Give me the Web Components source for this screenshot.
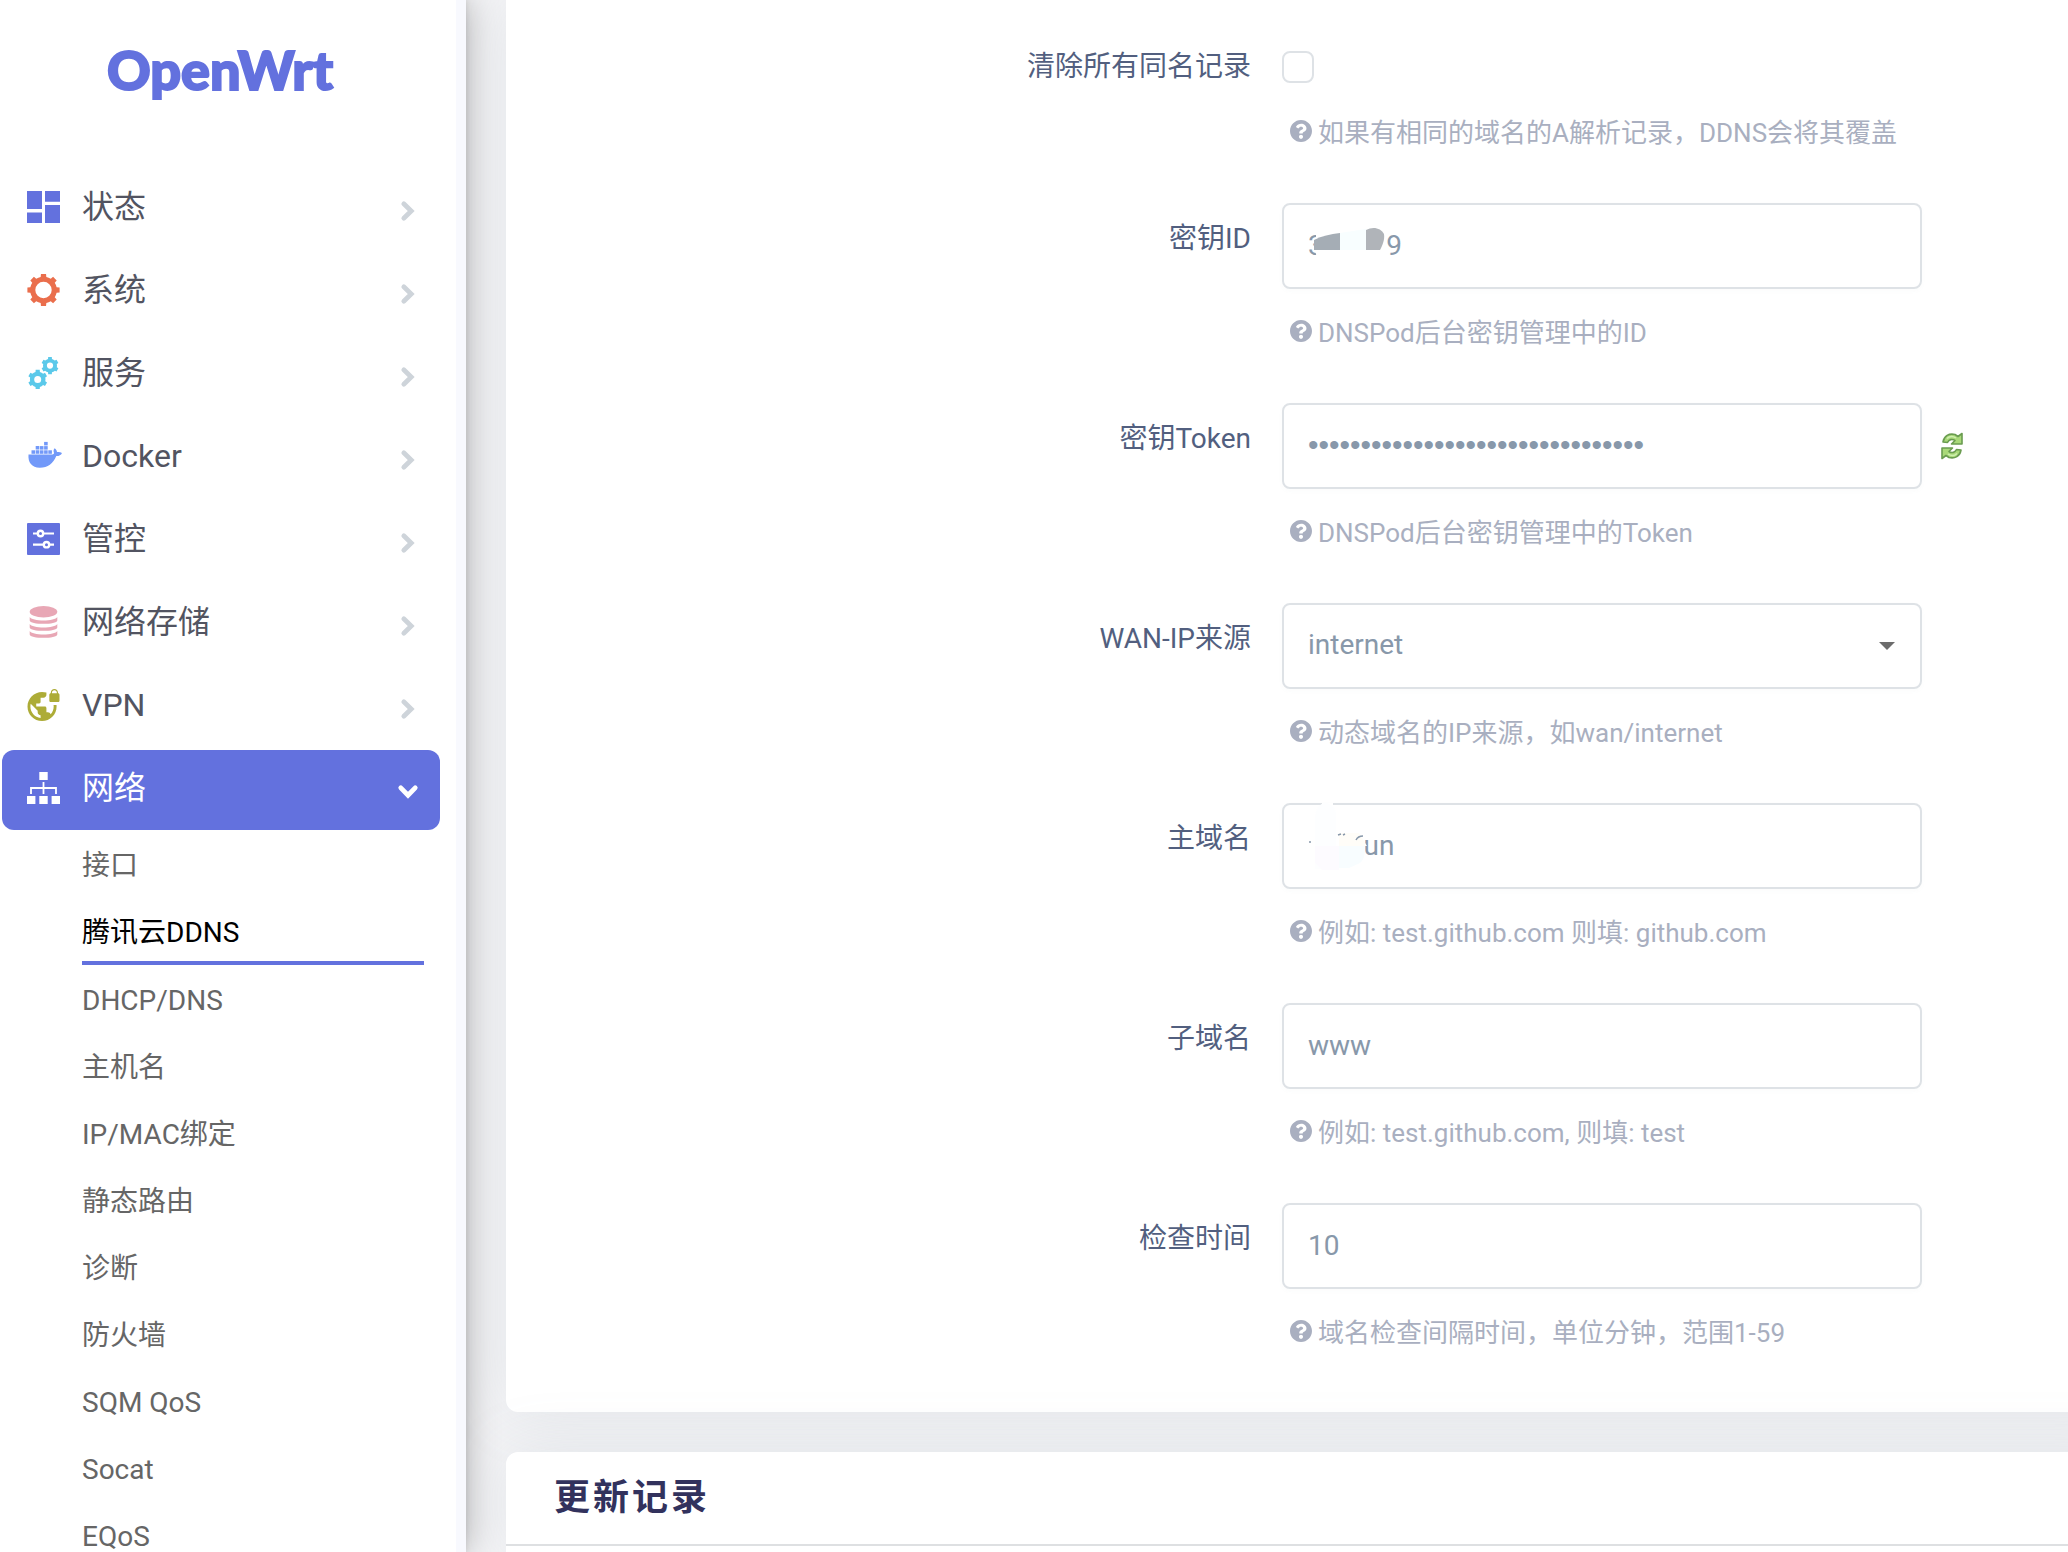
<!DOCTYPE html>
<html lang="zh-CN">
<head>
<meta charset="utf-8">
<title>腾讯云DDNS - OpenWrt</title>
<style>
html, body { margin: 0; height: 100%; }
body {
  background: #f4f4f6;
  overflow: hidden;
  font-family: Roboto, "Noto Sans CJK SC", sans-serif;
  --primary: #6371de;
}
</style>
</head>
<body>
<ow-shell>
  <ow-sidebar slot="side">
    <ow-menu-item icon="dashboard" label="状态" color="#6371de"></ow-menu-item>
    <ow-menu-item icon="gear" label="系统" color="#ea6e4c"></ow-menu-item>
    <ow-menu-item icon="gears" label="服务" color="#5bc9ea"></ow-menu-item>
    <ow-menu-item icon="docker" label="Docker" color="#7299f9"></ow-menu-item>
    <ow-menu-item icon="sliders" label="管控" color="#6371de"></ow-menu-item>
    <ow-menu-item icon="database" label="网络存储" color="#e8a7b5"></ow-menu-item>
    <ow-menu-item icon="vpn" label="VPN" color="#adac37"></ow-menu-item>
    <ow-menu-item icon="sitemap" label="网络" color="#ffffff" open>
      <ow-sub-item label="接口"></ow-sub-item>
      <ow-sub-item label="腾讯云DDNS" active></ow-sub-item>
      <ow-sub-item label="DHCP/DNS"></ow-sub-item>
      <ow-sub-item label="主机名"></ow-sub-item>
      <ow-sub-item label="IP/MAC绑定"></ow-sub-item>
      <ow-sub-item label="静态路由"></ow-sub-item>
      <ow-sub-item label="诊断"></ow-sub-item>
      <ow-sub-item label="防火墙"></ow-sub-item>
      <ow-sub-item label="SQM QoS"></ow-sub-item>
      <ow-sub-item label="Socat"></ow-sub-item>
      <ow-sub-item label="EQoS"></ow-sub-item>
    </ow-menu-item>
  </ow-sidebar>
  <ow-form-card>
    <ow-field type="checkbox" label="清除所有同名记录" hint="如果有相同的域名的A解析记录，DDNS会将其覆盖"></ow-field>
    <ow-field type="text" label="密钥ID" value="3         9" mask="id" hint="DNSPod后台密钥管理中的ID"></ow-field>
    <ow-field type="password" label="密钥Token" value="00000000000000000000000000000000" hint="DNSPod后台密钥管理中的Token"></ow-field>
    <ow-field type="select" label="WAN-IP来源" value="internet" hint="动态域名的IP来源，如wan/internet"></ow-field>
    <ow-field type="text" label="主域名" value="        un" mask="domain" hint="例如: test.github.com 则填: github.com"></ow-field>
    <ow-field type="text" label="子域名" value="www" hint="例如: test.github.com, 则填: test"></ow-field>
    <ow-field type="text" label="检查时间" value="10" hint="域名检查间隔时间，单位分钟，范围1-59"></ow-field>
  </ow-form-card>
  <ow-log-card>更新记录</ow-log-card>
</ow-shell>

<script>
/* Builds a cog outline with n flat teeth and a round hole. */
function cog(cx, cy, outer, root, hole, n) {
  const step = Math.PI * 2 / n;
  const pt = (r, a) => (cx + r * Math.sin(a)).toFixed(2) + ' ' + (cy - r * Math.cos(a)).toFixed(2);
  let d = '';
  for (let i = 0; i < n; i++) {
    const a = i * step;
    d += (i ? 'L' : 'M') + pt(root, a - step * .27) + 'L' + pt(outer, a - step * .2) +
         'L' + pt(outer, a + step * .2) + 'L' + pt(root, a + step * .27) +
         'A' + root + ' ' + root + ' 0 0 1 ' + pt(root, a + step * .73);
  }
  return d + 'Z M' + (cx - hole) + ' ' + cy +
    'a' + hole + ' ' + hole + ' 0 1 0 ' + hole * 2 + ' 0a' + hole + ' ' + hole + ' 0 1 0 ' + -hole * 2 + ' 0Z';
}
const band = y => `<path d="M2.7 ${y}c2 4.6 25.6 4.6 27.6 0v3.4c0 4.600-27.600 4.600-27.600 0z"/>`;
const box = (x, y) => `<path d="M${x} ${y}h3.600v3.500h-3.600z"/>`;
const ICONS = {
  dashboard: ['0 0 33 32', '<path d="M0 0h15v18H0zM0 21.500h15V32H0zM18 0h15v10.700H18zM18 14h15v18H18z"/>'],
  gear: ['0 0 33 32', `<path fill-rule="evenodd" d="${cog(16.5, 16, 16.3, 13.4, 8.2, 8)}"/>`],
  gears: ['0 0 33 32', `<path fill-rule="evenodd" d="${cog(10.7, 22.4, 9.8, 7.8, 3.5, 6)}"/><path fill-rule="evenodd" d="${cog(23, 8.6, 8.8, 7, 3.1, 6)}"/>`],
  docker: ['0 0 33 32', [[17.1, 1.9], [8.7, 6.1], [12.9, 6.1], [17.1, 6.1], [4.5, 10.3], [8.7, 10.3], [12.9, 10.3], [17.1, 10.3], [21.3, 10.3]].map(b => box(...b)).join('') +
    '<path d="M1.500 14.600H24.500c1.300-.2 2.200-.7 2.600-1.400-.9-2-.6-3.900.5-5 1.500.9 2.300 2.300 2.400 3.900 1.900-.3 3.600 0 5 .9-1.100 2.300-3 3.200-5.700 3.100C26 23.800 21 27.800 12.800 27.800 4.800 27.800.8 22.500 1.500 14.600z"/>'],
  sliders: ['0 0 33 32', '<rect width="33" height="32" rx="1"/><path d="M6 10.500H27M6 21.700H27" stroke="#fff" stroke-width="2.200" fill="none"/><circle cx="13.500" cy="10.500" r="2.700" stroke="#fff" stroke-width="2.400"/><circle cx="19.500" cy="21.700" r="2.700" stroke="#fff" stroke-width="2.400"/>'],
  database: ['0 0 33 32', '<ellipse cx="16.500" cy="5.700" rx="13.800" ry="5.700"/>' + band(11) + band(18) + band(25)],
  vpn: ['1 1 22 22', '<path d="M22 4v-.5C22 2.120 20.880 1 19.500 1S17 2.120 17 3.500V4c-.55 0-1 .45-1 1v4c0 .55.45 1 1 1h5c.55 0 1-.45 1-1V5c0-.55-.45-1-1-1zm-.8 0h-3.400v-.5c0-.94.76-1.700 1.700-1.700s1.700.76 1.700 1.700V4zm-2.280 8c.04.33.08.66.08 1 0 2.080-.8 3.970-2.100 5.390-.26-.81-1-1.390-1.900-1.390h-1v-3c0-.55-.45-1-1-1H7v-2h2c.55 0 1-.45 1-1V7h2c1.100 0 2-.9 2-2V3.460c-.95-.3-1.950-.46-3-.46C5.480 3 1 7.480 1 13s4.480 10 10 10 10-4.480 10-10c0-.34-.02-.67-.05-1h-2.030zM10 20.930c-3.950-.49-7-3.850-7-7.930 0-.62.08-1.210.21-1.790L8 16v1c0 1.100.9 2 2 2v1.930z"/>'],
  sitemap: ['0 0 33 32', '<path d="M12.300 0h8.400v8h-8.400zM0 24h8.400v8H0zM12.300 24h8.400v8h-8.400zM24.600 24H33v8h-8.400z"/><path d="M16.500 10v12M4 22v-6H29v6" fill="none" stroke="currentColor" stroke-width="1.800"/>'],
  chevron: ['0 0 14 20', '<path d="M2.800 2.800L10.200 10L2.800 17.200" fill="none" stroke="currentColor" stroke-width="4.800" stroke-linecap="round" stroke-linejoin="miter"/>'],
  help: ['8 8 496 496', '<path d="M504 256c0 137-111 248-248 248S8 393 8 256C8 119.100 119 8 256 8s248 111.100 248 248zM262.700 90c-54.500 0-89.300 23-116.500 63.800-3.500 5.300-2.400 12.400 2.700 16.300l34.700 26.300c5.200 3.900 12.600 3 16.700-2.100 17.900-22.700 30.100-35.800 57.300-35.800 20.400 0 45.700 13.100 45.700 33 0 15-12.400 22.700-32.500 34C247.100 238.500 216 254.900 216 296v4c0 6.600 5.400 12 12 12h56c6.600 0 12-5.400 12-12v-1.300c0-28.500 83.200-29.600 83.200-106.700 0-58-60.200-102-116.500-102zM256 338c-25.400 0-46 20.600-46 46s20.600 46 46 46 46-20.600 46-46-20.600-46-46-46z"/>'],
  caret: ['0 0 16 8', '<path d="M0 0h16L8 8z"/>'],
  refresh: ['0 0 22 28', '<g stroke="#6a9c50" stroke-width="1.600" fill="#a9d979" stroke-linejoin="round"><path d="M2 10C3 4 8 1 14 2.500L17 4.500 21 1.500V12H10.500L14 8.500C11 6.500 8 7.500 6.500 10.500z"/><path d="M20 18C19 24 14 27 8 25.500L5 23.500 1 26.500V16H11.500L8 19.500C11 21.500 14 20.500 15.500 17.500z"/></g><path d="M6 6.500C9 3.500 12 4 15 6M16 21.500C13 24.500 10 24 7 22" fill="none" stroke="#d0efb0" stroke-width="1.500"/>']
};

class Base extends HTMLElement {
  connectedCallback() {
    if (this.shadowRoot) return;
    this.attachShadow({ mode: 'open' }).innerHTML = this.render();
  }
  a(name) { return this.getAttribute(name) || ''; }
}

customElements.define('ow-icon', class extends Base {
  render() {
    const [vb, body] = ICONS[this.a('name')];
    return `<style>:host{display:inline-flex;flex:none}svg{display:block;width:100%;height:100%;overflow:visible}</style>
      <svg viewBox="${vb}" fill="currentColor" aria-hidden="true">${body}</svg>`;
  }
});

/* The content column runs 64px past the window so the cards bleed off its right edge. */
customElements.define('ow-shell', class extends Base {
  render() {
    return `<style>
      :host{display:flex;height:100vh;overflow:hidden}
      main{flex:1;min-width:0;display:flex;flex-direction:column;gap:40px;padding-left:40px;margin-right:-64px}
    </style><slot name="side"></slot><main><slot></slot></main>`;
  }
});

customElements.define('ow-sidebar', class extends Base {
  render() {
    return `<style>
      :host{display:block;flex:none;box-sizing:border-box;width:466px;height:100vh;overflow:hidden;background:#fff;
        border-right:10px solid #f8f9fe;box-shadow:0 0 6px rgba(0,0,0,.1),0 0 32px rgba(0,0,0,.3);position:relative;z-index:1}
      header{height:168px;box-sizing:border-box;padding:34px 16px 0 0;text-align:center}
      a{color:var(--primary);text-decoration:none;font:900 54px/72px Lato,sans-serif;-webkit-text-stroke:2px var(--primary)}
      nav{display:flex;flex-direction:column;gap:3px;padding:1px 16px 0 2px}
    </style>
    <header><a href="#">OpenWrt</a></header><nav><slot></slot></nav>`;
  }
});

customElements.define('ow-menu-item', class extends Base {
  render() {
    const open = this.hasAttribute('open');
    return `<style>
      :host{display:block}
      a{display:flex;align-items:center;height:80px;box-sizing:border-box;padding:0 25px 4px 25px;border-radius:12px;
        font-size:32px;line-height:40px;color:#525461;text-decoration:none}
      :host([open]) a{background:var(--primary);color:#fff}
      .icon{width:33px;height:32px;margin-right:22px;color:${this.a('color')}}
      span{flex:1}
      .arrow{width:14px;height:20px;margin-top:8px;color:#ced4da}
      :host([open]) .arrow{color:#fff;transform:rotate(90deg)}
      div{padding:1px 16px 0 80px}
    </style>
    <a href="#"><ow-icon class="icon" name="${this.a('icon')}"></ow-icon><span>${this.a('label')}</span>
      <ow-icon class="arrow" name="chevron"></ow-icon></a>
    ${open ? '<div><slot></slot></div>' : ''}`;
  }
});

customElements.define('ow-sub-item', class extends Base {
  render() {
    return `<style>
      :host{display:block}
      :host([active]){margin-bottom:1px}
      a{display:block;box-sizing:border-box;height:67px;padding:21px 0 0;border-bottom:4px solid transparent;
        font-size:28px;line-height:28px;color:#666;text-decoration:none}
      :host([active]) a{color:#000;border-color:var(--primary)}
    </style><a href="#">${this.a('label')}</a>`;
  }
});

customElements.define('ow-form-card', class extends Base {
  render() {
    return `<style>
      :host{display:block;background:#fff;border-radius:0 0 12px 12px;padding:3px 64px 9px 0;
        box-shadow:0 0 64px rgba(136,152,170,.15)}
      form{display:block}
    </style><form><slot></slot></form>`;
  }
});

customElements.define('ow-log-card', class extends Base {
  render() {
    return `<style>
      :host{display:block;flex:1;background:#fff;border-radius:12px 12px 0 0;box-shadow:0 0 64px rgba(136,152,170,.15)}
      h3{margin:0;padding:20px 48px;border-bottom:2px solid #dee0e2;
        font-size:36px;line-height:52px;font-weight:700;letter-spacing:3px;color:#32325d}
    </style><h3><slot></slot></h3>`;
  }
});

const MASKS = {
  id: '<svg class="mask" viewBox="0 0 110 86"><path d="M8 31h24v26H11c-3-3-4-8-3-12z" fill="#fff"/><path d="M6 37C14 33 22 31 32 30V47H6z" fill="#a5adb5"/><path d="M32 30L58 26V47H32z" fill="#f8feff"/><path d="M58 27C65 23 73 25 76 31C77 37 74 43 72 47H58z" fill="#b0b4b9"/></svg>',
  domain: '<svg class="mask" viewBox="0 0 110 86"><path d="M14 0h11v3H14z" fill="#fff"/><path d="M7 14C9-2 22-6 28 10V66H7z" fill="#fdfeff"/><path d="M7 43h24v24H14L7 60z" fill="#fdfbff"/><path d="M31 43h26c-1 6 1 12-5 17L41 65H31z" fill="#f8fdff"/><path d="M31 30h20l8 13H31z" fill="#fffdf8"/><path d="M48 37q2-4 7-4M30 32l3-1M35 32l2-1M1 39l2 0" stroke="#8898aa" stroke-width="1.500" fill="none"/></svg>'
};

customElements.define('ow-field', class extends Base {
  render() {
    const type = this.a('type'), value = this.a('value');
    let control = `<input id="f" class="box" type="${type}" value="${value}">`;
    if (type === 'checkbox') control = '<input id="f" type="checkbox">';
    if (type === 'select') control = `<select id="f" class="box"><option>${value}</option></select><ow-icon class="caret" name="caret"></ow-icon>`;
    if (this.a('mask')) control += MASKS[this.a('mask')];
    return `<style>
      :host{display:grid;grid-template-columns:745fr 786fr;column-gap:31px;min-height:200px}
      label{padding-top:16px;text-align:right;font-size:28px;line-height:40px;color:#525f7f}
      .row{display:flex;align-items:center;gap:19px}
      .control{position:relative;width:640px}
      .box{display:block;box-sizing:border-box;width:100%;height:86px;margin:0;padding:0 24px 2px;border:2px solid #dee2e6;
        border-radius:8px;background:#fff;color:#8898aa;font:28px/40px Roboto,"Noto Sans CJK SC",sans-serif;
        appearance:none;outline:0;box-shadow:0 2px 4px rgba(136,152,170,.03)}
      input[type=password]{font-family:"Liberation Sans",sans-serif;font-size:30px}
      input[type=checkbox]{display:block;appearance:none;box-sizing:border-box;width:32px;height:32px;margin:0;border:2px solid #dee2e6;
        border-radius:8px;background:#fff}
      .caret{position:absolute;right:27px;top:39px;width:16px;height:8px;color:#6c6c6c;pointer-events:none}
      .mask{position:absolute;left:26px;top:0;width:110px;height:86px;pointer-events:none}
      button{display:flex;padding:0;border:0;background:none}
      .refresh{width:22px;height:28px}
      p{display:flex;align-items:center;gap:6px;margin:24px 0 0 8px;font-size:26px;line-height:40px;color:#a9afc0;white-space:nowrap}
      .help{width:22px;height:22px;margin-bottom:4px}
      :host([type=checkbox]){min-height:152px;padding-top:48px}
      :host([type=checkbox]) label{padding-top:0;margin-top:-4px}
      :host([type=checkbox]) p{margin-top:30px}
    </style>
    <label for="f">${this.a('label')}</label>
    <div>
      <div class="row"><div class="control">${control}</div>
        ${type === 'password' ? '<button type="button" aria-label="显示/隐藏 密码"><ow-icon class="refresh" name="refresh"></ow-icon></button>' : ''}</div>
      <p><ow-icon class="help" name="help"></ow-icon><span>${this.a('hint')}</span></p>
    </div>`;
  }
});
</script>
</body>
</html>
